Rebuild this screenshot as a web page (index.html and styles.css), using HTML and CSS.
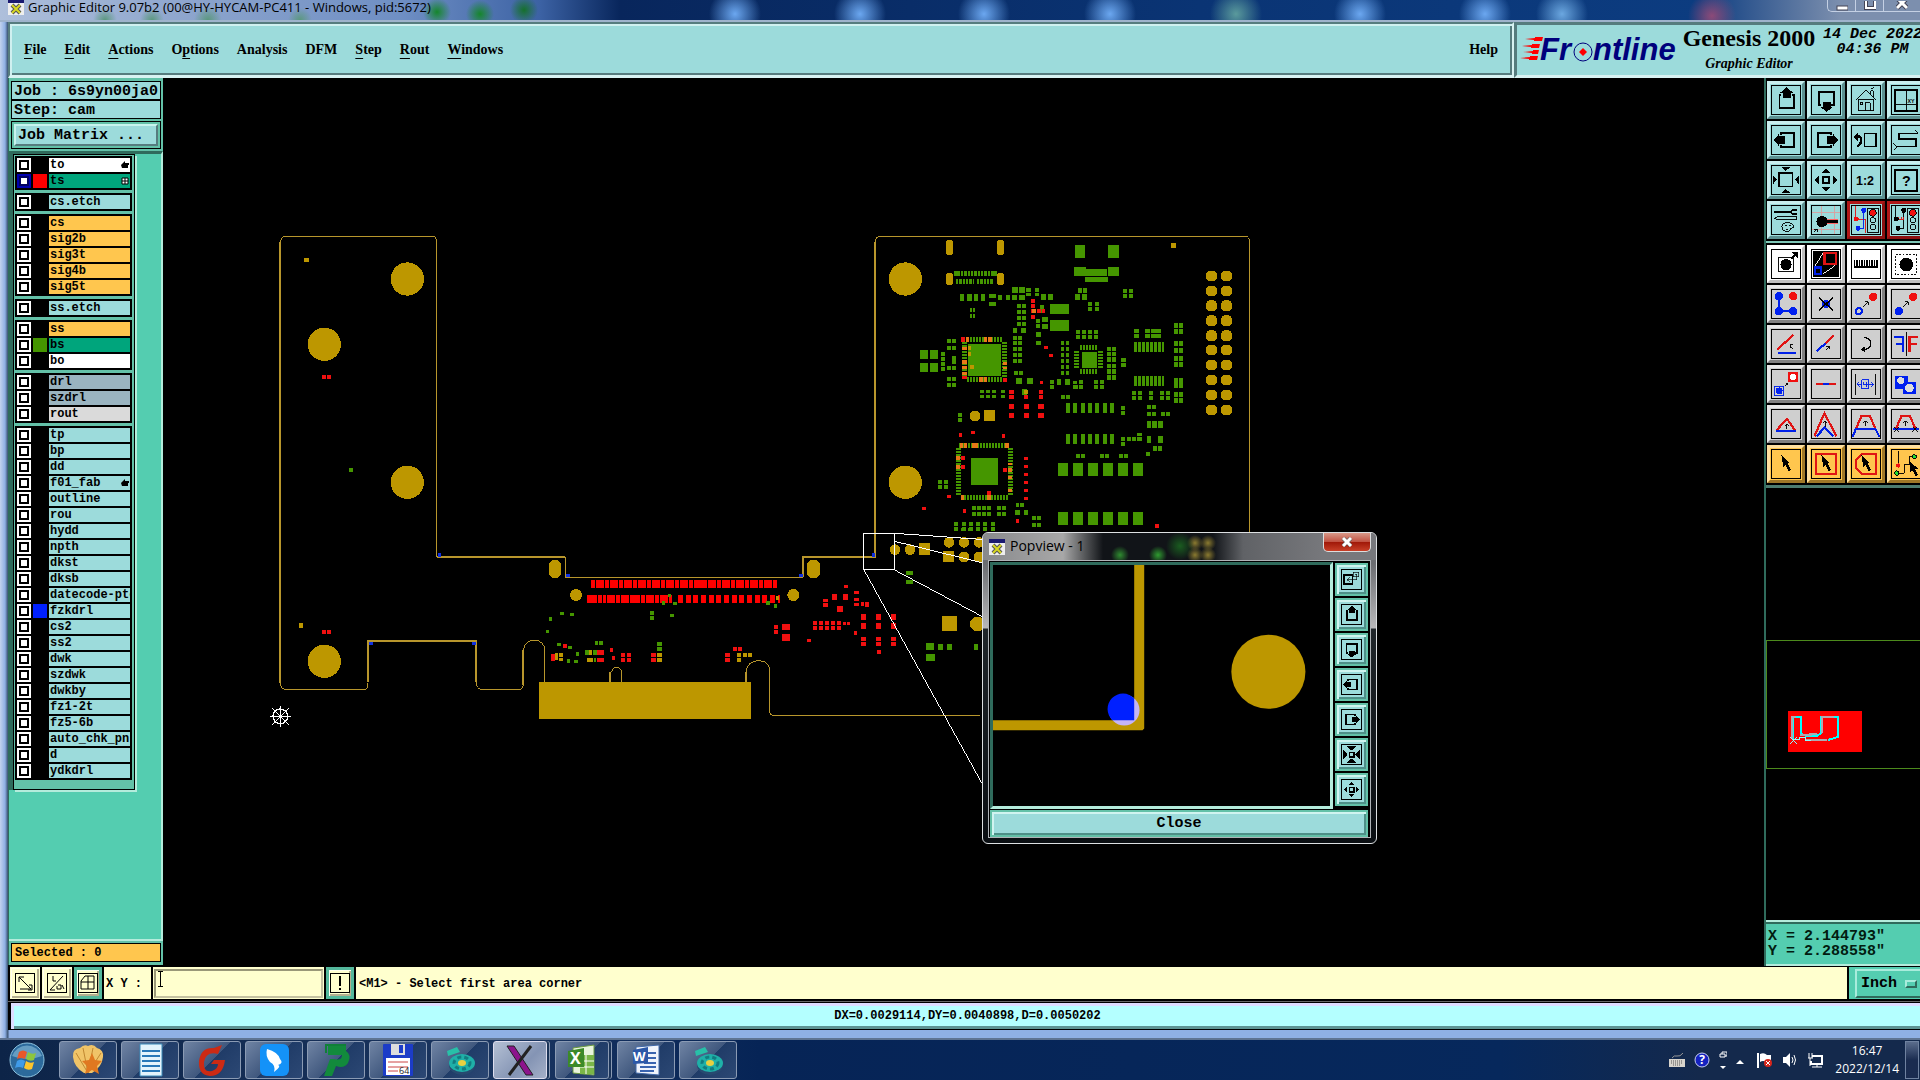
FILE: index.html
```
<!DOCTYPE html>
<html lang="en">
<head>
    <meta charset="UTF-8">
    <meta name="viewport" content="width=device-width, initial-scale=1.0">
    <title>Graphic Editor</title>
    <link rel="stylesheet" href="styles.css">
</head>
<body>

<div class="window">
    <div class="titlebar">
        <svg class="appicon" viewBox="0 0 16 16"><rect width="16" height="16" fill="#eee"/><rect width="16" height="4" fill="#1a1a70"/><path d="M4 6l8 8M12 6l-8 8" stroke="#555" stroke-width="4"/><path d="M4 6l8 8M12 6l-8 8" stroke="#d8d820" stroke-width="2"/></svg>
        <span>Graphic Editor 9.07b2 (00@HY-HYCAM-PC411 - Windows, pid:5672)</span>
        <div class="winbtns">
            <button aria-label="Minimize"><svg viewBox="0 0 12 10"><rect x="1" y="5" width="11" height="4" fill="#fff" stroke="#445"/></svg></button>
            <button aria-label="Maximize"><svg viewBox="0 0 12 10"><rect x="2" y="-2" width="9" height="9" fill="none" stroke="#445" stroke-width="4"/><rect x="2" y="-2" width="9" height="9" fill="none" stroke="#fff" stroke-width="2"/></svg></button>
            <button class="wide" aria-label="Close window"><svg viewBox="0 0 12 10"><path d="M1-3l10 10M11-3L1 7" stroke="#445" stroke-width="5"/><path d="M1-3l10 10M11-3L1 7" stroke="#fff" stroke-width="3"/></svg></button>
        </div>
    </div>

    <div class="client">
        <header class="top">
            <nav class="menubar">
                <a href="#"><u>F</u>ile</a>
                <a href="#"><u>E</u>dit</a>
                <a href="#"><u>A</u>ctions</a>
                <a href="#">O<u>p</u>tions</a>
                <a href="#">Analysis</a>
                <a href="#">DFM</a>
                <a href="#"><u>S</u>tep</a>
                <a href="#"><u>R</u>out</a>
                <a href="#"><u>W</u>indows</a>
                <a class="help" href="#">Help</a>
            </nav>
            <div class="brand">
                <svg class="logo" viewBox="0 0 162 28">
                    <path d="M5 3l10-1v-1h8l-1 4h-8v-1zM2 10l10-1v-1h8l-1 4h-8v-1zM3 16l10-1v-1h6l-1 4h-6v-1zM0 22l10-1v-1h8l-1 4h-8v-1z" fill="#f00"/>
                    <text x="20" y="24">Fr</text>
                    <circle cx="63" cy="16" r="9" fill="none" stroke="#00007c" stroke-width="1"/>
                    <path d="M63 12l4 4-4 4-4-4z" fill="#f00"/>
                    <text x="73" y="24">ntline</text>
                </svg>
                <div class="product">
                    <b>Genesis 2000</b>
                    <i>Graphic Editor</i>
                </div>
                <div class="date">14 Dec 2022<br>04:36 PM</div>
            </div>
        </header>

        <main class="work">
            <aside class="left">
                <div class="job">Job : 6s9yn00ja0</div>
                <div class="job">Step: cam</div>
                <div class="matrixbox"><button class="matrix">Job Matrix ...</button></div>
                <div class="layerarea">
                    <div class="layers" id="layers"></div>
                </div>
                <div class="selected">Selected : 0</div>
            </aside>

            <section class="canvas">
                <svg class="board" viewBox="163 78 1602 888" shape-rendering="crispEdges">
                    <!-- left wing -->
                    <g transform="translate(260 220) scale(.3333333)">
                        <g class="line">
                            <path class="thick" d="M61 1390V65M530 1011H725M324 1385V1263H648V1385"/>
                            <path d="M61 70q0-20 16-21H517q14 0 14 14M530 60V1011M61 1390q2 18 16 18H315q10 0 9-18M648 1385q2 23 16 23H722"/>
                        </g>
                        <g class="gold">
                            <circle cx="442" cy="177" r="50"/><circle cx="193" cy="373" r="50"/>
                            <circle cx="442" cy="787" r="50"/><circle cx="193" cy="1324" r="50"/>
                            <path d="M132 115h14v11h-14zM117 1209h12v15h-12z"/>
                        </g>
                        <path class="red" d="M186 465h12v12h-12zM201 465h12v12h-12zM186 1230h12v12h-12zM201 1230h12v12h-12z"/>
                        <path class="green" d="M267 744h12v12h-12z"/>
                        <path class="blue" d="M534 998h9v13h-9zM327 1266h12v9h-12zM636 1266h12v9h-12z"/>
                        <g stroke="#fff" stroke-width="4" fill="none">
                            <circle cx="61" cy="1489" r="22"/>
                            <path d="M30 1489h63M61 1458v63M37 1465l49 49M86 1465l-49 49"/>
                        </g>
                    </g>
                    <!-- edge connector and middle strip -->
                    <g transform="translate(500 530) scale(.3333333)">
                        <g class="line">
                            <path class="thick" d="M0 80H196M909 142V80H1125V-865M70 465V360M331 456V426M738 456V425"/>
                            <path d="M196 80V142H909M0 478H60q10 0 10-12M70 360q5-29 32-29q32 0 32 32V456M331 426q6-14 18-14q16 0 16 16V456M738 425q5-33 38-33q33 0 33 33V546q2 10 10 10H1440"/>
                        </g>
                        <g class="gold">
                            <rect x="117" y="456" width="636" height="111"/>
                            <rect x="147" y="89" width="36" height="55" rx="17"/><rect x="921" y="89" width="39" height="55" rx="17"/>
                            <circle cx="228" cy="195" r="18"/><circle cx="880" cy="195" r="18"/>
                            <circle cx="1185" cy="59" r="16"/><circle cx="1230" cy="59" r="16"/><circle cx="1347" cy="37" r="16"/><circle cx="1392" cy="37" r="16"/><circle cx="1437" cy="37" r="16"/><circle cx="1392" cy="81" r="16"/><circle cx="1437" cy="81" r="16"/><circle cx="1432" cy="282" r="22"/>
                            <path d="M1257 40h33v35h-33zM1329 63h33v33h-33zM1326 258h45v45h-45z"/>
                        </g>
                        <g class="pins redpins">
                            <path stroke-width="24" stroke-dasharray="12 2" d="M273 162H834"/>
                            <path stroke-width="24" stroke-dasharray="12 2" d="M294 207H318M348 207H388M423 207H516"/>
                            <path stroke-width="24" d="M261 207h30M321 207h25M390 207h30M586 162h22"/>
                            <path stroke-width="24" stroke-dasharray="15 8" d="M534 207H840"/>
                        </g>
                        <g id="strip"></g>
                        <path class="blue" d="M198 132h12v10h-12zM897 132h12v10h-12zM1115 69h9v12h-9z"/>
                        <path d="M1090 10h93v109h-93zM1184 10l286 20M1184 34l286 70M1184 120l286 152M1092 120l365 660" fill="none" stroke="#fff" stroke-width="3"/>
                    </g>
                    <!-- right wing -->
                    <g transform="translate(860 220) scale(.3333333)">
                        <g class="line">
                            <path d="M45 70q0-20 14-21H1155q14 0 14 14V1600"/>
                        </g>
                        <g class="gold" id="rightgold">
                            <circle cx="136" cy="177" r="50"/><circle cx="136" cy="787" r="50"/><circle cx="345" cy="588" r="16"/>
                            <rect x="258" y="60" width="21" height="45" rx="10"/><rect x="411" y="60" width="21" height="45" rx="10"/>
                            <rect x="258" y="159" width="21" height="36" rx="10"/><rect x="411" y="159" width="21" height="36" rx="10"/>
                            <path d="M933 69h15v15h-15zM372 570h33v33h-33z"/>
                        </g>
                        <g class="pins">
                            <path stroke-width="15" stroke-dasharray="18 3" d="M282 160h18M393 160h18"/>
                            <path stroke-width="15" stroke-dasharray="7 3" d="M303 160h88M288 184h54M351 184h51"/>
                            <path stroke-width="15" stroke-dasharray="6 3" d="M321 358h105M321 478h105M313 366v108M434 366v108M297 677h150M303 832h141M295 684v141M451 684v141"/>
                            <path stroke-width="15" stroke-dasharray="6 3" d="M660 382h51M660 455h51M651 393v51M721 393v51"/>
                            <path stroke-width="30" stroke-dasharray="9 3" d="M822 381h90M822 483h90"/>
                            <path stroke-width="29" stroke-dasharray="12 10" d="M618 564h144M618 658h144"/>
                            <path stroke-width="39" stroke-dasharray="30 15" d="M594 748h255M594 895h255"/>
                            <path stroke-width="12" stroke-dasharray="12 3" d="M249 396v56"/>
                        </g>
                        <g id="parts"></g>
                    </g>
                </svg>

                <div class="popview">
                    <div class="poptitle">
                        <svg class="appicon" viewBox="0 0 16 16"><rect width="16" height="16" fill="#eee"/><rect width="16" height="4" fill="#1a1a70"/><path d="M4 6l8 8M12 6l-8 8" stroke="#555" stroke-width="4"/><path d="M4 6l8 8M12 6l-8 8" stroke="#d8d820" stroke-width="2"/></svg>
                        <span>Popview - 1</span>
                        <button class="popx" aria-label="Close popview"><svg viewBox="0 0 12 10"><path d="M2 1l8 8M10 1L2 9" stroke="#555" stroke-width="4"/><path d="M2 1l8 8M10 1L2 9" stroke="#fff" stroke-width="3"/></svg></button>
                    </div>
                    <div class="popbody">
                        <div class="popmain">
                            <svg class="popcanvas" viewBox="69 135 1014 722" preserveAspectRatio="xMinYMin slice">
                                <path d="M492 135h30v490l-5 5H69v-30H492z" fill="#bd9700"/>
                                <circle cx="894" cy="455" r="111" fill="#bd9700"/>
                                <circle cx="462" cy="570" r="46" fill="#c5b5f5"/>
                                <path d="M492 535a46 46 0 1 0-65 65h65z" fill="#0020ff"/>
                            </svg>
                            <div class="poptools" id="poptools"></div>
                        </div>
                        <button class="popclose">Close</button>
                    </div>
                </div>
            </section>

            <aside class="right">
                <div class="tools" id="tools1"></div>
                <div class="tools second" id="tools2"></div>
                <div class="preview">
                    <svg viewBox="1 2 154 434" shape-rendering="crispEdges">
                        <rect x="1" y="154" width="170" height="128" fill="none" stroke="#4c8a1c"/>
                        <rect x="23" y="225" width="74" height="41" fill="#f00"/>
                        <path d="M28 253v-22h8v17l6 2h10l4-3v-16h17v20l-10 3" fill="none" stroke="#0ff" stroke-width="2"/>
                        <path d="M27 253v-22h4M57 247v-16h12M35 249h12M40 254h22M44 248h8" fill="none" stroke="#b0a8b0" stroke-width="2"/>
                        <path d="M28 253h6v-2h6v3h6M25 258l7-7M25 251l7 7" fill="none" stroke="#8ff" stroke-width="1"/>
                    </svg>
                </div>
                <div class="coords">X = 2.144793"<br>Y = 2.288558"</div>
            </aside>
        </main>

        <div class="statusbar">
            <button class="sbtn" aria-label="Snap"><svg viewBox="0 0 20 20"><rect x=".5" y=".5" width="19" height="19"/><path d="M4 4l12 12M4 9V4h5M5 16h11M14 12h3v5h-4"/></svg></button>
            <button class="sbtn" aria-label="Angle"><svg viewBox="0 0 20 20"><rect x=".5" y=".5" width="19" height="19"/><path d="M3 17L16 3M3 17h5M6 3v5h3M11 12h3v4h-4v-3M15 12l2 4"/></svg></button>
            <button class="sbtn teal" aria-label="Grid"><svg viewBox="0 0 20 20"><rect x=".5" y=".5" width="19" height="19"/><path d="M7 3h9v13H3V8zM3 9h13M10 3v13"/></svg></button>
            <label class="xy" for="xy">X Y :</label>
            <div class="xybox"><input id="xy" type="text"></div>
            <button class="sbtn teal" aria-label="Alert"><svg viewBox="0 0 20 20"><rect x=".5" y=".5" width="19" height="19"/><path d="M10 3v10M10 15v2" stroke-width="2"/></svg></button>
            <div class="message">&lt;M1&gt; - Select first area corner</div>
            <div class="unitbox"><button class="unit">Inch <span></span></button></div>
        </div>
        <div class="infobar">DX=0.0029114,DY=0.0040898,D=0.0050202</div>
    </div>
</div>

<footer class="taskbar">
    <button class="start" aria-label="Start">
        <svg viewBox="0 0 36 36">
            <circle cx="18" cy="18" r="17" fill="#2c6a9c"/><circle cx="18" cy="18" r="17" fill="none" stroke="#8fc4e0"/>
            <path d="M3 14a16 16 0 0 1 30 0q-15 6-30 0z" fill="#8cc0dc" opacity=".6"/>
            <path d="M10 10q4-3 8 0l-2 7q-4-2-8 0z" fill="#e8582a"/><path d="M19 10q4 3 8 1l-2 7q-4 2-8-1z" fill="#8cc63e"/>
            <path d="M8 19q4-3 8 0l-2 7q-4-2-8 0z" fill="#3f9be8"/><path d="M17 19q4 3 8 1l-2 7q-4 2-8-1z" fill="#fcc52c"/>
        </svg>
    </button>
    <div class="apps" id="apps"></div>
    <div class="tray">
        <svg width="16" height="14" viewBox="0 0 16 14"><path d="M3 5q2-3 5-2t6-3" fill="none" stroke="#999"/><rect x="0" y="6" width="16" height="8" fill="#d8d4cc"/><path d="M2 8h12M2 10h12M4 12h8" stroke="#555" stroke-dasharray="1 1"/></svg>
        <svg width="16" height="16" viewBox="0 0 16 16"><circle cx="8" cy="8" r="7" fill="#1522c0" stroke="#c8d0f0"/><text x="8" y="12" text-anchor="middle" font-size="12" font-weight="bold" fill="#fff">?</text></svg>
        <svg width="8" height="18" viewBox="0 0 8 18"><path d="M3 3V1h5v4H6M1 3h5v3H1z" fill="none" stroke="#fff"/><path d="M1 15h6l-3 3z" fill="#fff"/></svg>
        <svg class="uparrow" width="8" height="4" viewBox="0 0 8 4"><path d="M0 4h8L4 0z" fill="#fff"/></svg>
        <svg width="16" height="16" viewBox="0 0 16 16"><path d="M1 1v15" stroke="#fff" stroke-width="2"/><path d="M3 2q4-2 7 1h4v7H9q-3-2-6 0z" fill="#fff"/><circle cx="11" cy="11" r="4" fill="#d8261c"/><path d="M9 9l4 4M13 9l-4 4" stroke="#fff"/></svg>
        <svg width="16" height="16" viewBox="0 0 16 16"><path d="M1 5h3l4-4v14l-4-4H1z" fill="#fff"/><path d="M10 5q2 3 0 6M12 3q3 5 0 10" fill="none" stroke="#fff"/></svg>
        <svg width="16" height="16" viewBox="0 0 16 16"><path d="M5 4h10v8H4V9" fill="none" stroke="#fff" stroke-width="2"/><path d="M5 15h10M10 12v3M2 1v5M5 1v5M1 6h5M3 6v8" stroke="#fff"/></svg>
        <div class="clock">16:47<br>2022/12/14</div>
        <button class="desktop" aria-label="Show desktop"></button>
    </div>
</footer>

<script src="script.js"></script>
</body>
</html>
```
FILE: styles.css
```
* { box-sizing: border-box; }
body {
    margin: 0;
    height: 100vh;
    display: flex;
    flex-direction: column;
    overflow: hidden;
    background: #0a2450;
    font-family: "Liberation Mono", monospace;
    font-weight: bold;
    color: #000;
}
button {
    font: inherit;
    color: inherit;
    padding: 0;
    margin: 0;
    border: 0;
    background: none;
    cursor: pointer;
}
svg { display: block; }

/* window frame */
.window {
    flex: 1;
    min-height: 0;
    display: flex;
    flex-direction: column;
    padding: 0 0 8px 8px;
    background: linear-gradient(90deg, #c3d3ee 0, #8fb0e4 5px, #38506e 8px, #8fb0e4 9px);
}
.titlebar {
    flex: none;
    display: flex;
    align-items: flex-start;
    height: 22px;
    margin-left: -8px;
    padding-left: 8px;
    border-bottom: 2px solid #9fb3cc;
    background:
        radial-gradient(circle at 437px 12px, #15862c 0, transparent 14px),
        radial-gradient(circle at 480px 14px, #15862c 0, transparent 14px),
        radial-gradient(circle at 524px 10px, #15702c 0, transparent 14px),
        radial-gradient(circle at 105px 20px, #5b987e 0, transparent 12px),
        radial-gradient(circle at 152px 20px, #5b987e 0, transparent 12px),
        radial-gradient(circle at 208px 20px, #5b987e 0, transparent 14px),
        radial-gradient(circle at 300px 20px, #5b987e 0, transparent 12px),
        radial-gradient(circle at 735px 14px, #6ba7f0 0, transparent 26px),
        radial-gradient(circle at 860px 14px, #6ba7f0 0, transparent 26px),
        radial-gradient(circle at 984px 14px, #6ba7f0 0, transparent 26px),
        radial-gradient(circle at 1110px 14px, #6ba7f0 0, transparent 26px),
        radial-gradient(circle at 1236px 14px, #5a9a9c 0, transparent 26px),
        radial-gradient(circle at 1360px 14px, #6ba7f0 0, transparent 26px),
        radial-gradient(circle at 1485px 14px, #6ba7f0 0, transparent 26px),
        radial-gradient(circle at 1562px 14px, #6ba7e0 0, transparent 26px),
        radial-gradient(circle at 1712px 16px, #8c4a78 0, transparent 24px),
        linear-gradient(90deg, #aebfdb 0, #8ba3cc 200px, #6f8fc4 400px, #3c62a4 540px, #08265c 620px, #0a3474 1200px, #0c3c80 1700px, #7c8fae 1840px);
    font: 13px/14px "Open Sans", sans-serif;
}
.appicon { width: 16px; height: 16px; flex: none; }
.titlebar .appicon { margin: -1px 4px 0 0; }
.winbtns {
    display: flex;
    margin-left: auto;
    height: 12px;
    border: 1px solid #c4d0e4;
    border-top: 0;
    border-right: 0;
    border-radius: 0 0 0 5px;
}
.winbtns button {
    width: 28px;
    height: 11px;
    border-right: 1px solid #c4d0e4;
    overflow: hidden;
}
.winbtns .wide { width: 36px; border: 0; }
.winbtns svg { width: 12px; height: 10px; margin: 0 auto; }
.client {
    flex: 1;
    min-height: 0;
    display: flex;
    flex-direction: column;
    background: #000;
}

/* header */
.top { flex: none; display: flex; height: 56px; overflow: hidden; background: #9cdbdb; }
.menubar {
    flex: 1;
    display: flex;
    align-items: center;
    gap: 18px;
    padding: 0 14px 0 14px;
    border: 2px solid #567c7e;
    border-right-color: #d8f2f2;
    border-bottom: 3px solid #d8f2f2;
    box-shadow: inset 2px 2px #d0f0f0, inset -2px -2px #567c7e;
    font: bold 14px/18px "Liberation Serif", serif;
}
.menubar a { color: #000; text-decoration: none; }
.menubar u { text-underline-offset: 4px; text-decoration-thickness: 1px; }
.menubar .help { margin-left: auto; }
.brand {
    flex: none;
    width: 406px;
    display: flex;
    border: 3px solid #567c7e;
    border-right: 0;
    border-bottom-color: #d8f2f2;
    padding-left: 3px;
}
.logo { width: 162px; height: 28px; margin-top: 11px; flex: none; overflow: visible; }
.logo text { font: italic bold 31px "Liberation Sans", sans-serif; fill: #00007c; }
.product {
    flex: none;
    display: flex;
    flex-direction: column;
    align-items: center;
    width: 134px;
    font-family: "Liberation Serif", serif;
    white-space: nowrap;
    font-size: 24px;
    line-height: 26px;
}
.product i { font-size: 14px; line-height: 26px; }
.date {
    flex: none;
    margin-left: 7px;
    width: 99px;
    font-size: 15px;
    font-style: italic;
    line-height: 15px;
    text-align: center;
    white-space: nowrap;
    padding-top: 2px;
}

.work { flex: 1; min-height: 0; display: flex; }

/* layer list */
.left {
    flex: none;
    width: 155px;
    margin-bottom: 1px;
    display: flex;
    flex-direction: column;
    background: #63c1a8;
    border-left: 1px solid #2f6b5c;
    padding-top: 3px;
}
.job {
    height: 19px;
    margin: 0 2px;
    padding-left: 2px;
    background: #9cdbdb;
    border: 1px solid #000;
    font-size: 15px;
    line-height: 19px;
    white-space: nowrap;
    overflow: hidden;
}
.matrixbox { margin: 2px 2px 2px; padding: 2px; border: 1px solid #000; }
.matrix {
    display: block;
    width: 100%;
    height: 22px;
    padding: 0 0 0 2px;
    text-align: left;
    font-size: 15px;
    line-height: 20px;
    background: #9cdbdb;
    border: 2px solid #c8f4ee;
    border-right-color: #567c7e;
    border-bottom-color: #567c7e;
}
.layerarea {
    flex: 1;
    min-height: 0;
    background: #54cdb0;
    border-top: 3px solid #2f6b5c;
    border-right: 2px solid #b4ecdc;
    border-bottom: 2px solid #b4ecdc;
}
.layers {
    width: 122px;
    margin-left: 4px;
    padding: 1px 2px 9px 1px;
    border: 1px solid #000;
    background: #63c1a8;
    box-shadow: -4px 0 #2f6b5c, 2px 2px #b4ecdc;
    display: flex;
    flex-direction: column;
    gap: 3px;
}
.group {
    background: #000;
    padding: 2px;
    display: grid;
    gap: 2px;
}
.layer {
    display: grid;
    grid-template-columns: 14px 14px 1fr;
    gap: 2px;
    height: 14px;
    font-size: 12px;
    line-height: 14px;
}
.layer input {
    appearance: none;
    width: 14px;
    height: 14px;
    margin: 0;
    background: #fff;
    border: 2px solid #fff;
    box-shadow: inset 0 0 0 2px #000;
}
.layer input:checked {
    border-color: #0000b0;
    box-shadow: inset 0 0 0 2px #000060;
}
.name {
    display: flex;
    justify-content: space-between;
    align-items: center;
    padding: 0 1px;
    white-space: nowrap;
    overflow: hidden;
    background: #9cdbdb;
}
.name svg { width: 8px; height: 8px; flex: none; }
.white .name { background: #fff; }
.active .name { background: #00a57c; }
.gold .name { background: #ffc64e; }
.slate .name { background: #9ab4c0; }
.gray .name { background: #dadada; }
.selected {
    height: 19px;
    margin: 2px 2px 3px;
    padding-left: 3px;
    border: 1px solid #000;
    background: #ffc64e;
    font-size: 12px;
    line-height: 18px;
}

/* board */
.canvas { flex: 1; min-width: 0; position: relative; overflow: hidden; background: #000; }
.board { width: 1602px; height: 888px; }
.board .gold, .board .goldpart { fill: #bd9700; }
.line path { fill: none; stroke: #b8962c; stroke-width: 3; }
.line .thick { stroke-width: 5; }
.red { fill: #f01010; }
.green { fill: #459600; }
.blue { fill: #1030e0; }
.orange { fill: #e87818; }
.pins path { stroke: #459600; fill: none; }
.redpins path { stroke: #f00; }

/* popup window over the board */
.popview {
    position: absolute;
    left: 819px;
    top: 454px;
    width: 395px;
    height: 312px;
    padding: 0 5px 5px;
    border: 1px solid #dde0e2;
    border-radius: 6px;
    background: linear-gradient(#77787c 0, #6a6c70 30px, #b8b8ba 95px, #20262a 96px, #0a0e12 100%);
    display: flex;
    flex-direction: column;
}
.poptitle {
    flex: none;
    height: 27px;
    margin: 0 -5px;
    border-radius: 5px 5px 0 0;
    padding: 6px 5px 0 6px;
    display: flex;
    gap: 5px;
    background:
        radial-gradient(circle at 137px 22px, #2f8c30 0, transparent 9px),
        radial-gradient(circle at 175px 22px, #2f9c30 0, transparent 9px),
        radial-gradient(circle at 197px 13px, #1a5c20 0, transparent 14px),
        radial-gradient(circle at 212px 10px, #8a7a30 0, transparent 8px),
        radial-gradient(circle at 225px 10px, #8a7a30 0, transparent 8px),
        radial-gradient(circle at 212px 22px, #8a7a30 0, transparent 8px),
        radial-gradient(circle at 225px 22px, #8a7a30 0, transparent 8px),
        linear-gradient(90deg, #88898c 0, #a8a8a8 80px, #111418 120px, #111418 230px, #606266 260px, #77787c 340px);
    font: 14px/14px "Open Sans", sans-serif;
}
.popx {
    width: 48px;
    height: 19px;
    margin: -6px 0 0 auto;
    border: 1px solid #ddd;
    border-top: 0;
    border-radius: 0 0 5px 5px;
    background: linear-gradient(#d89888 0, #c05040 50%, #a01808 51%, #c84028 100%);
}
.popx svg { width: 12px; height: 10px; margin: 0 auto; }
.popbody {
    flex: 1;
    min-height: 0;
    display: flex;
    flex-direction: column;
    gap: 1px;
    padding: 1px 1px 0;
    background: #000;
    border: 1px solid #b0b4b8;
}
.popmain { flex: 1; min-height: 0; display: flex; gap: 2px; }
.popcanvas {
    flex: 1;
    min-width: 0;
    height: 100%;
    border: 3px solid #2f6b5c;
    border-right-color: #b4ecdc;
    border-bottom-color: #b4ecdc;
}
.poptools { flex: none; width: 34px; display: flex; flex-direction: column; gap: 2px; padding-top: 1px; }
.poptools button {
    width: 33px;
    height: 33px;
    padding: 2px;
    background: #9cdbdb;
    border: 2px solid #63c1a8;
    box-shadow: inset 2px 2px #d0f4f0, inset -2px -2px #4f9088;
}
.poptools svg { width: 21px; height: 21px; margin: 2px; border: 1px solid #000; }
.popclose {
    flex: none;
    height: 27px;
    margin-right: 1px;
    font-size: 15px;
    background: #9cdbdb;
    border: 2px solid #63c1a8;
    box-shadow: inset 2px 2px #d0f4f0, inset -2px -2px #4f9088;
}

/* tool buttons */
.right {
    flex: none;
    width: 156px;
    overflow: hidden;
    display: flex;
    flex-direction: column;
    border-left: 2px solid #2f6b5c;
}
.tools {
    flex: none;
    width: 160px;
    display: grid;
    grid-template-columns: repeat(4, 38px);
    gap: 2px;
    padding: 3px 0 0 1px;
    background: #000;
}
.second { margin-top: 2px; border-top: 2px solid #7fc8b8; padding-top: 2px; padding-bottom: 2px; border-bottom: 3px solid #4d7c70; }
.tools button {
    height: 38px;
    padding: 1px;
    background: #9cdbdb;
    border: 3px solid #c8eeee;
    border-right-color: #5d9090;
    border-bottom-color: #5d9090;
}
.tools svg { width: 30px; height: 30px; border: 1px solid #000; }
.tools .hot { border-color: #b01818 #8c1010 #8c1010 #b01818; }
.tools .on { background: #fff; border-color: #fff #c0c0c0 #c0c0c0 #fff; }
.tools .plain { background: #cfcfcf; border-color: #e8e8e8 #808080 #808080 #e8e8e8; }
.tools .pick { background: #ffc64e; border-color: #ffe0a0 #a07828 #a07828 #ffe0a0; }
.tools svg { fill: none; stroke: #000; stroke-width: 6; shape-rendering: crispEdges; }
.poptools svg { fill: none; stroke: #000; stroke-width: 8; shape-rendering: crispEdges; }
.f { fill: #000; stroke: none; }
.r { stroke: #e01414; stroke-width: 7; }
.b { stroke: #0020e8; stroke-width: 7; }
.thin { stroke-width: 3; }
.rf { fill: #f01010; stroke: none; }
.bf { fill: #0020f0; stroke: none; }
.tools text { font: bold 40px "Liberation Sans", sans-serif; fill: #000; stroke: none; }
.preview { flex: 1; min-height: 0; overflow: hidden; }
.preview svg { width: 154px; height: 434px; }
.coords {
    flex: none;
    height: 46px;
    padding: 7px 0 0 2px;
    border-top: 2px solid #b4ecdc;
    border-bottom: 2px solid #b4ecdc;
    box-shadow: inset 0 2px #2f6b5c;
    background: #54cdb0;
    color: #021c10;
    font-size: 15px;
    line-height: 15px;
    white-space: nowrap;
}

/* bottom bars */
.statusbar {
    flex: none;
    display: flex;
    gap: 2px;
    height: 36px;
    padding: 1px 0 2px 2px;
    border-bottom: 1px solid #666;
    background: #000;
    font-size: 12px;
    line-height: 34px;
    white-space: nowrap;
}
.sbtn {
    width: 30px;
    padding: 5px 3px;
    background: #ffffce;
    border: 1px solid #ffffce;
    box-shadow: inset 1px 1px #fffff0, inset -2px -2px #b4b090;
}
.sbtn svg { width: 20px; height: 20px; margin: 0 auto; fill: none; stroke: #000; }
.teal { width: 28px; border: 3px solid #54b89c; padding: 2px 0; }
.xy { width: 47px; padding-left: 2px; background: #ffffce; }
.xybox { position: relative; width: 171px; padding: 2px 1px; background: #ffffce; }
.xybox input {
    display: block;
    width: 100%;
    height: 29px;
    padding: 0 4px;
    border: 2px solid #9a9878;
    border-right-color: #c4c2a0;
    border-bottom-color: #c4c2a0;
    background: #ffffce;
    font: inherit;
}
/* mouse pointer resting in the field */
.xybox::after {
    content: "";
    position: absolute;
    left: 5px;
    top: 4px;
    width: 5px;
    height: 16px;
    background:
        linear-gradient(#000, #000) center / 1px 100% no-repeat,
        linear-gradient(#000, #000) top / 5px 1px no-repeat,
        linear-gradient(#000, #000) bottom / 5px 1px no-repeat;
}
.message { flex: 1; padding-left: 3px; background: #ffffce; }
.unitbox { flex: none; width: 71px; overflow: hidden; padding: 2px 0 0 6px; background: #54cdb0; }
.unit {
    width: 80px;
    height: 29px;
    padding-left: 4px;
    display: flex;
    align-items: center;
    gap: 8px;
    font-size: 15px;
    border: 2px solid #a8ecdc;
    border-bottom-color: #2f6b5c;
}
.unit span { width: 12px; height: 8px; background: #54cdb0; border: 2px solid #a8ecdc; border-right-color: #2f6b5c; border-bottom-color: #2f6b5c; }
.infobar {
    flex: none;
    height: 28px;
    margin-left: 2px;
    border: 1px solid #000;
    border-right: 0;
    background: #b4ffff;
    box-shadow: inset 3px 3px #ddf, inset 0 -3px #5e9494;
    font-size: 12px;
    line-height: 27px;
    text-align: center;
    padding-left: 4px;
}

/* taskbar */
.taskbar {
    flex: none;
    height: 42px;
    display: flex;
    align-items: center;
    border-top: 2px solid #5f7492;
    background: linear-gradient(90deg, #0d2448 0, #1a3560 500px, #062456 760px, #06285c 1500px, #14294c 1700px);
    font: 12px/18px "Open Sans", sans-serif;
    color: #fff;
}
.start { width: 36px; margin: 0 14px 0 9px; }
.start svg { width: 36px; height: 38px; }
.apps { display: flex; gap: 4px; }
.apps button {
    width: 58px;
    height: 38px;
    border: 1px solid #8b9bb4;
    border-radius: 3px;
    background: linear-gradient(135deg, #7084a4 0, #40587e 50%, #203c68 51%, #2c4874 100%);
}
.apps .open { background: linear-gradient(135deg, #b4c0d4, #8494b4 60%, #a4b0c8); border-color: #dde; }
.apps .many { width: 54px; margin-right: 4px; box-shadow: 2px 0 #1a3358, 3px 0 #8b9bb4; }
.apps svg { width: 36px; height: 34px; margin: 0 auto; }
.tray { display: flex; align-items: center; gap: 9px; margin-left: auto; height: 100%; }
.tray text { font-family: "Open Sans", sans-serif; }
.uparrow { margin: 4px 4px 0 0; }
.clock { text-align: center; margin: 0 -3px 0 3px; }
.desktop { width: 14px; height: 38px; margin-right: 1px; border: 1px solid #6f82a0; background: linear-gradient(#5a6c8c, #1a2c50 50%); }
```
FILE: script.js
```
// layer list: name, row style, swatch, marker
var hand = '<svg viewBox="0 0 8 8"><path d="M0 4l4-4v2h4v2H7v3H1z"/></svg>';
var mark = '<svg viewBox="0 0 8 8"><path d="M1 1h6v6H1z" fill="#fff"/><path d="M1 1h6v6H1zM4 1v6M1 4h6" fill="none" stroke="#000"/></svg>';
var groups = [
    [["to", "white", "", hand], ["ts", "active", "#f00", mark]],
    [["cs.etch"]],
    [["cs", "gold"], ["sig2b", "gold"], ["sig3t", "gold"], ["sig4b", "gold"], ["sig5t", "gold"]],
    [["ss.etch"]],
    [["ss", "gold"], ["bs", "active", "#459600"], ["bo", "white"]],
    [["drl", "slate"], ["szdrl", "slate"], ["rout", "gray"]],
    [["tp"], ["bp"], ["dd"], ["f01_fab", "", "", hand], ["outline"], ["rou"], ["hydd"], ["npth"], ["dkst"], ["dksb"],
     ["datecode-ptc"], ["fzkdrl", "", "#0020ff"], ["cs2"], ["ss2"], ["dwk"], ["szdwk"], ["dwkby"], ["fz1-2t"],
     ["fz5-6b"], ["auto_chk_pnl"], ["d"], ["ydkdrl"]]
];
document.getElementById("layers").innerHTML = groups.map(function (g) {
    return '<div class="group">' + g.map(function (l) {
        return '<label class="layer ' + (l[1] || "") + '"><input type="checkbox"' + (l[0] === "ts" ? " checked" : "") + '>' +
            '<span style="background:' + (l[2] || "#000") + '"></span>' +
            '<span class="name">' + l[0] + (l[3] || "") + '</span></label>';
    }).join("") + '</div>';
}).join("");

// pads: x, y, width, height
function pads(id, cls, list) {
    var d = "";
    for (var i = 0; i < list.length; i += 4)
        d += "M" + list[i] + " " + list[i + 1] + "h" + list[i + 2] + "v" + list[i + 3] + "h-" + list[i + 2] + "z";
    document.getElementById(id).innerHTML += '<path class="' + cls + '" d="' + d + '"/>';
}
function grid(id, cls, xs, ys, w, h) {
    var list = [];
    ys.forEach(function (y) { xs.forEach(function (x) { list.push(x, y, w, h); }); });
    pads(id, cls, list);
}

pads("parts", "green", [
    645,75,30,39, 744,75,33,39, 642,141,35,27, 744,141,33,27, 675,147,66,21, 675,170,69,16,
    300,222,12,21, 321,222,15,21, 342,222,12,21, 363,222,12,21, 387,222,21,12, 387,246,21,12,
    414,225,12,15, 438,225,12,15, 456,201,18,18, 477,201,18,18, 498,204,15,12, 525,204,12,12,
    456,225,15,15, 477,225,18,15, 498,219,15,9, 525,219,12,9, 543,222,15,18, 564,222,15,18,
    459,324,12,15, 483,324,15,15, 570,252,57,30, 570,300,57,33, 528,297,12,12, 546,291,18,15,
    528,312,12,12, 546,312,18,15, 528,336,15,15, 528,363,15,12, 540,255,12,24,
    654,204,12,15, 669,204,12,15, 645,222,15,18, 666,222,15,18,
    324,372,99,96, 180,390,24,27, 210,390,24,27, 180,429,24,27, 210,429,24,27,
    276,408,12,24, 261,438,12,12, 276,438,12,12, 666,396,45,48, 783,414,15,12, 783,429,15,12,
    570,480,12,12, 570,495,12,12, 591,477,12,18, 615,477,15,18,
    639,483,12,9, 657,480,12,12, 639,495,15,12, 657,495,12,12,
    468,474,18,18, 501,474,18,18, 463,453,11,12, 477,453,12,12, 603,525,12,12, 618,525,12,12,
    783,558,12,12, 783,573,12,12, 903,576,12,12, 918,576,12,12,
    861,603,12,21, 876,603,15,21, 894,603,15,21, 861,648,12,21, 894,648,15,21,
    879,678,12,15, 894,678,12,15, 858,696,12,12,
    783,651,12,12, 801,651,12,12, 816,651,12,12, 831,639,15,9, 831,651,15,12, 783,666,12,12,
    333,714,81,81, 294,579,12,12, 294,594,12,12,
    468,849,10,12, 480,849,12,12, 465,870,15,15, 492,870,12,15, 486,507,15,18
]);
grid("parts", "green", [330, 339], [264, 282], 6, 12);
grid("parts", "green", [471, 486], [252, 270, 288, 306], 12, 12);
grid("parts", "green", [460, 474], [348, 362, 380, 399, 416], 12, 12);
grid("parts", "green", [789, 807], [207, 222], 12, 12);
grid("parts", "green", [684, 705], [247, 261], 13, 12);
grid("parts", "green", [261, 276], [357, 378], 12, 12);
grid("parts", "green", [261, 276], [471, 489], 12, 12);
grid("parts", "green", [648, 666, 684, 702], [330, 345], 12, 12);
grid("parts", "green", [741, 756], [381, 396, 412, 432, 448, 466], 12, 13);
grid("parts", "green", [603, 618], [363, 381, 399, 417, 435, 453], 9, 12);
grid("parts", "green", [822, 855, 873, 889], [327, 342], 14, 12);
grid("parts", "green", [942, 957], [309, 327, 363, 384, 408, 426, 474, 490, 516, 534], 12, 14);
grid("parts", "green", [816, 834, 867, 900, 918], [513, 528], 13, 12);
grid("parts", "green", [702, 720], [480, 495], 12, 12);
grid("parts", "green", [360, 378, 396, 423], [510, 524], 12, 9);
grid("parts", "green", [861, 876], [555, 576], 12, 12);
grid("parts", "green", [648, 663, 720, 735, 777, 792], [702], 12, 12);
grid("parts", "green", [234, 252], [780, 795], 12, 12);
grid("parts", "green", [336, 351, 366, 381, 411, 426], [858, 876], 12, 12);
grid("parts", "green", [516, 531], [888, 908], 12, 13);
grid("parts", "green", [282, 306, 327, 348, 369, 393], [906, 921], 12, 12);
grid("parts", "red", [513], [237, 252, 268, 285], 12, 12);
grid("parts", "red", [492], [711, 735, 759, 783, 807, 831], 12, 9);
pads("parts", "red", [
    531,267,12,12, 545,267,9,12, 551,378,12,9, 566,402,12,9, 539,483,10,9,
    447,510,15,12, 447,525,15,12, 492,525,12,12, 537,510,12,12, 537,525,12,12,
    447,552,15,15, 492,552,15,15, 534,552,18,15, 447,579,15,15, 492,579,15,15, 534,579,18,15,
    297,639,9,12, 332,633,13,9, 426,642,9,12, 260,825,12,9, 187,861,12,9, 309,867,9,12, 468,897,9,12, 885,912,12,12,
    303,708,12,12, 303,736,12,12, 429,744,12,12, 381,813,12,12, 303,351,13,15, 307,468,13,9, 429,474,12,12
]);
pads("parts", "orange", [
    318,351,9,15, 372,351,9,15, 385,351,12,15, 307,420,13,12, 307,437,13,10, 307,456,13,9, 307,380,13,9,
    429,425,12,10, 429,440,12,8, 358,471,10,15, 372,471,10,15, 300,670,9,14, 313,670,9,14, 336,670,18,14, 435,670,12,14,
    289,708,12,12, 289,736,12,12, 444,728,13,8, 444,745,13,12, 444,767,13,9, 444,808,13,9, 303,826,10,14, 381,826,12,14, 515,268,12,10
]);
pads("parts", "goldpart", [324,378,9,12, 324,396,9,12, 330,435,12,12, 492,510,11,12]);
[168, 213, 257, 302, 347, 390, 435, 480, 525, 570].forEach(function (y) {
    document.getElementById("rightgold").innerHTML +=
        '<rect x="1038" y="' + (y - 16) + '" width="33" height="32" rx="13"/><rect x="1083" y="' + (y - 16) + '" width="33" height="32" rx="13"/>';
});

pads("strip", "red", [
    969,207,15,10, 969,219,15,12, 996,192,15,18, 1029,192,15,18, 1011,228,18,18, 1033,164,11,9,
    1062,183,15,9, 1062,204,15,9, 1062,219,15,9, 1083,216,9,12, 1095,216,12,15,
    846,282,24,18, 846,312,24,21, 822,285,12,12, 822,300,12,12, 921,326,12,9, 1062,302,9,12, 1029,276,9,9, 1041,276,9,9,
    1131,360,12,12, 189,342,12,12, 330,353,9,12, 336,377,9,12, 153,372,12,20, 291,360,21,15, 291,384,21,12,
    453,369,15,12, 453,384,15,12, 699,351,12,12, 714,351,12,12, 675,369,15,12, 675,384,15,12,
    363,369,12,12, 381,369,12,12, 363,384,12,12, 381,384,12,12
]);
grid("strip", "red", [939, 957, 975, 993, 1011], [273, 288], 12, 12);
grid("strip", "red", [1083, 1128, 1173], [252, 279], 15, 18);
grid("strip", "red", [1083, 1128, 1173], [321, 336], 15, 12);
pads("strip", "green", [
    486,212,9,12, 503,192,10,9, 519,216,12,8, 509,252,13,9, 450,243,12,12, 450,258,12,12,
    179,246,12,9, 209,249,12,9, 148,261,8,12, 137,299,9,9, 171,339,12,9, 204,348,12,9, 228,365,9,12, 201,386,9,12, 221,390,12,9,
    285,333,10,12, 298,333,11,12, 471,336,15,12, 471,351,15,12, 255,360,12,15, 279,360,12,15, 281,384,8,12,
    798,213,12,11, 822,222,9,12, 1218,123,21,13, 1218,150,21,11, 1278,339,24,21, 1278,372,27,21, 1314,342,15,18, 1341,342,15,18, 1422,342,12,18,
    1362,-6,12,9, 1383,-6,12,9, 1404,-6,12,9
]);
pads("strip", "goldpart", [
    165,369,9,20, 177,369,12,12, 177,383,12,9, 267,360,9,15, 261,384,18,12, 471,369,15,12, 471,384,15,12,
    711,369,12,12, 729,369,12,12, 744,369,12,12, 711,384,12,12, 828,197,8,12
]);

// tool icons, drawn on a 90 x 90 grid
var up = '<path d="M30 28H24V70H70V28H64"/><path class="f" d="M26 22L47 4 68 22H60V40H35V22z"/>';
var down = '<path d="M30 62H22V20H70V62H62"/><path class="f" d="M26 66L47 84 68 66H60V52H35V66z"/>';
var left = '<path d="M30 30V22H72V68H30V62"/><path class="f" d="M24 24L4 45 24 66V58H42V32H24z"/>';
var right = '<path d="M60 30V22H18V68H60V62"/><path class="f" d="M66 24L86 45 66 66V58H48V32H66z"/>';
var zin = '<path d="M22 22H66V66H22z"/><path class="f" d="M28 2H60L44 16zM28 88H60L44 74zM2 28V60L16 44zM88 28V60L74 44z"/>';
var zout = '<path d="M35 35H56V56H35z"/><path class="f" d="M28 24H62L45 9zM28 66H62L45 81zM24 28V62L8 45zM66 28V62L82 45z"/>';
var arrow = '<path class="f" d="M30 16L58 42 50 44 62 64 54 68 44 48 36 54z"/>';
var light = '<rect class="thin" x="50" y="8" width="34" height="76"/><circle class="rf" cx="67" cy="22" r="11"/><circle class="thin" cx="67" cy="22" r="11"/><circle class="thin" cx="67" cy="46" r="9"/><circle class="thin" cx="67" cy="68" r="9"/>';
function draw(id, list) {
    document.getElementById(id).innerHTML = list.map(function (t) {
        return '<button class="' + t[0] + '" aria-label="' + t[1] + '"><svg viewBox="0 0 90 90">' + t[2] + '</svg></button>';
    }).join("");
}
draw("tools1", [
    ["", "Pan up", up],
    ["", "Pan down", down],
    ["", "Home", '<path class="thin" d="M13 46L45 14 78 46M20 42V80H70V42M20 42H70M42 80V54H58V80M26 52H34V60H26zM60 26V16H68V36M62 10l8-6"/>'],
    ["", "View XY", '<path d="M10 12H80V80H10z"/><path class="thin" d="M46 12V80M10 60H80"/><text x="50" y="54" style="font-size:17px">XY</text>'],
    ["", "Pan left", left],
    ["", "Pan right", right],
    ["", "Previous view", '<path d="M40 24H78V66H40z"/><path d="M14 34H24Q28 34 28 44V52Q28 62 16 64" stroke-width="7"/><path class="f" d="M4 36L18 22V50z"/>'],
    ["", "Serpentine", '<path d="M84 24H22V42H78V66H14"/><path class="thin" d="M76 14l10 10M6 56l10 10-10 10"/>'],
    ["", "Zoom in", zin],
    ["", "Zoom out", zout],
    ["", "Scale", '<text x="13" y="60">1:2</text>'],
    ["", "Query", '<path d="M10 12H80V80H10z"/><text x="32" y="64" style="font-size:46px">?</text>'],
    ["", "Setup", '<path stroke-width="7" d="M8 18H60"/><path stroke-width="5" d="M80 12H66Q56 18 66 26H80"/><path class="thin" d="M8 40L20 34H80V44H20zM32 68Q30 54 50 54Q70 54 70 68L60 72Q58 84 44 82Q34 80 32 68M42 64h6M54 62h6M44 74h6"/>'],
    ["", "Snap pad", '<path class="thin" style="stroke:#d8a0a0" d="M32 0V90M72 0V90M0 20H90M0 76H90"/><path d="M30 50H84" style="stroke:#f66;stroke-width:14"/><path d="M30 50H84" stroke-width="7"/><circle class="f" cx="32" cy="50" r="18"/><path class="thin" d="M6 84l10-10M8 74h9v9"/>'],
    ["hot", "Net check", '<path class="r thin" d="M12 0V42H44V88"/><path class="b thin" d="M38 16V72H20"/><circle class="bf" cx="38" cy="14" r="8"/><circle class="rf" cx="14" cy="42" r="8"/><circle class="bf" cx="20" cy="72" r="8"/>' + light],
    ["hot", "Rule check", '<path class="thin" d="M12 0V42M38 16V72H20"/><path class="r thin" d="M18 42H40M22 34V42M30 34V42M36 34V42"/><circle class="f" cx="38" cy="14" r="8"/><circle class="f" cx="14" cy="42" r="8"/><circle class="f" cx="20" cy="72" r="8"/>' + light]
]);
var bigN = '<path class="b" d="M22 20V68M22 68H68"/><circle class="bf" cx="22" cy="20" r="13"/><circle class="bf" cx="22" cy="68" r="13"/><circle class="bf" cx="68" cy="68" r="13"/><circle class="rf" cx="68" cy="20" r="13"/>';
draw("tools2", [
    ["on", "Select feature", '<path class="thin" d="M22 24H68V70H22z"/><circle class="f" cx="45" cy="47" r="18"/><path stroke-width="7" d="M62 28L80 10"/><path class="f" d="M62 6H84V28z"/>'],
    ["on", "Popview", '<path class="f" d="M4 4H86V86H4z"/><path class="r" d="M40 10H76V46H40z"/><path class="b" d="M10 56H28V76H10z"/><path stroke="#fff" class="thin" d="M10 50L36 10M34 78L74 50"/>'],
    ["on", "Measure", '<path d="M6 54H84"/><path stroke-width="20" stroke-dasharray="4 4" d="M6 42H84"/>'],
    ["on", "Area", '<path class="thin" stroke-dasharray="6 5" d="M12 14H78V80H12z"/><circle class="f" cx="46" cy="47" r="22"/>'],
    ["plain", "Add net", bigN],
    ["plain", "Delete", '<circle class="bf" cx="45" cy="45" r="14"/><path stroke-width="5" d="M22 24L68 66M68 24L22 66"/>'],
    ["plain", "Move", '<circle class="b" cx="22" cy="68" r="10"/><circle class="rf" cx="68" cy="22" r="13"/><path class="thin" d="M34 56L52 38M42 38H52V48"/>'],
    ["plain", "Copy", '<circle class="bf" cx="22" cy="68" r="13"/><circle class="rf" cx="68" cy="22" r="13"/><path class="thin" d="M34 56L52 38M42 38H52V48"/>'],
    ["plain", "Angle", '<path class="r" d="M16 64L68 16"/><path class="b" d="M18 74H76"/><path class="thin" d="M68 60L58 50M58 58V48H68"/>'],
    ["plain", "Line", '<path class="r" d="M44 42L70 16"/><path class="b" d="M16 68L44 42"/><path class="thin" d="M46 62L56 52M46 52H56V60"/>'],
    ["plain", "Rotate", '<path stroke-width="4" d="M40 24Q64 26 60 48Q56 64 34 62"/><path class="f" d="M28 62L42 52V72z"/>'],
    ["plain", "Mirror", '<path class="b" d="M8 22H36V70M12 46H36"/><path class="thin" d="M46 8V82"/><path class="r" d="M82 22H56V70M80 46H56"/>'],
    ["plain", "Replace", '<path class="rf" d="M50 6H84V38H50z"/><circle cx="67" cy="22" r="10" fill="#fff" stroke="none"/><path class="b thin" d="M8 52H38V82H8z"/><circle class="bf" cx="23" cy="67" r="11"/><path class="thin" d="M42 50L50 42M44 42H50V48"/>'],
    ["plain", "Join", '<path class="r" d="M12 44H76"/><path class="b" d="M36 44H54"/>'],
    ["plain", "Spacing", '<path class="thin" d="M12 12V80M74 12V80"/><path class="b thin" d="M16 46H32M54 46H70M32 32H54V60H32zM24 38L16 46 24 54M62 38L70 46 62 54M38 38V48H50M46 40V56"/>'],
    ["plain", "Merge", '<path class="bf" d="M10 18H52V40H76V78H34V60H10z"/><circle cx="28" cy="34" r="11" fill="#ddd" stroke="none"/><circle cx="56" cy="58" r="14" fill="#ddd" stroke="none"/>'],
    ["plain", "Stretch 1", '<path class="r" d="M14 66L48 28 74 66"/><path class="b" d="M12 68H76"/><path class="thin" d="M48 60V46M42 52L48 46 54 52"/>'],
    ["plain", "Stretch 2", '<path class="r" d="M8 84L40 10 78 84"/><path class="b" d="M16 84L40 56 68 84"/><path class="thin" d="M42 54V34M34 42L42 34 50 42"/>'],
    ["plain", "Stretch 3", '<path class="r" d="M14 58L30 20H58L74 58"/><path class="b" d="M2 86L12 62H76L88 86"/><path class="thin" d="M44 52V34M36 42L44 34 52 42"/>'],
    ["plain", "Stretch 4", '<path class="r" d="M14 58L30 20H58L74 58"/><path class="b" d="M2 62H88"/><path class="thin" d="M44 52V34M36 42L44 34 52 42M6 54L22 70M22 54L6 70M66 54L82 70M82 54L66 70"/>'],
    ["pick", "Select", arrow],
    ["pick", "Select rectangle", '<path class="r" d="M14 14H76V76H14z"/>' + arrow],
    ["pick", "Select polygon", '<path class="r" d="M30 14H76V76H30L14 60V30z"/>' + arrow],
    ["pick", "Select net", '<path class="thin" d="M20 4V48M18 74H40V48H56V22H74"/><circle class="rf" cx="20" cy="50" r="7"/><circle class="thin" cx="72" cy="22" r="7" fill="#2d3"/><circle class="thin" cx="16" cy="74" r="7" fill="#2d3"/><path class="f" d="M56 36L84 60 74 62 84 80 76 84 66 66 58 72z"/>']
]);
draw("poptools", [
    ["", "Detach", '<path d="M10 24H50V66H10z"/><path class="thin" d="M54 10H80V32H54zM70 20V46H24M36 36L24 46 36 56M62 20H70"/>'],
    ["", "Up", up], ["", "Down", down], ["", "Left", left], ["", "Right", right],
    ["", "Zoom in", '<path d="M35 35H56V56H35z"/><path class="f" d="M20 4H70L45 26zM20 86H70L45 64zM4 20V70L26 45zM86 20V70L64 45z"/>'],
    ["", "Zoom out", zout]
]);

// taskbar icons on a 36 x 34 grid
var reel = '<ellipse cx="20" cy="22" rx="13" ry="10" fill="#274a70"/><ellipse cx="20" cy="20" rx="13" ry="9" fill="#1fb0a8"/><ellipse cx="20" cy="20" rx="8" ry="6" fill="none" stroke="#127c80" stroke-dasharray="4 3" stroke-width="3"/><ellipse cx="20" cy="20" rx="4" ry="3" fill="#e8d040"/><path d="M5 8l10-4 3 5-12 4z" fill="#28c0a8"/>';
var apps = [
    ["", "Shell", '<path d="M3 14Q2 6 10 5Q14 1 18 3Q23 0 27 5Q34 7 33 14Q32 24 22 30H14Q4 24 3 14z" fill="#f0c468"/><path d="M18 30L6 10M18 30L13 5M18 30L23 5M18 30L31 10" stroke="#c08830" fill="none"/><path d="M22 10l3 7 7 1-5 5 2 8-7-4-7 4 2-8-5-5 7-1z" fill="#e07820"/>'],
    ["", "Notes", '<path d="M8 1H30V33H8z" fill="#e4f4fc" stroke="#3a8ab8"/><path d="M10 8h18M10 13h18M10 18h18M10 23h18M10 28h18" stroke="#2878b8" stroke-width="2"/>'],
    ["", "G", '<path d="M28 2l-4 9Q12 8 10 19Q9 30 18 28Q24 26 24 21H17l3-4h11Q29 33 16 33Q4 32 5 18Q7 4 20 5z" fill="#cc2a14"/>'],
    ["", "Bird", '<rect x="4" y="1" width="29" height="32" rx="6" fill="#1492f8"/><path d="M11 6Q22 9 24 16Q28 20 22 22Q26 23 18 29Q20 22 14 19Q9 13 11 6z" fill="#fff"/>'],
    ["", "P", '<path d="M10 2H28V8Q34 12 30 20Q26 26 18 23L14 33H6L12 16H16Q24 18 24 12H10z" fill="#128a3c"/><path d="M8 10V2H28" fill="none" stroke="#108038" stroke-width="2"/>'],
    ["", "Floppy", '<rect x="3" y="1" width="30" height="32" rx="1" fill="#1c3cc8"/><rect x="11" y="1" width="14" height="11" fill="#ddd"/><rect x="19" y="2" width="4" height="8" fill="#1c3cc8"/><rect x="6" y="15" width="24" height="17" fill="#fff"/><path d="M8 19h20M8 24h20M8 28h10" stroke="#c44"/><text x="19" y="31" font-size="9" fill="#222">64</text>'],
    ["", "Reel", reel],
    ["open many", "X", '<path d="M5 3H12L31 32H24z" fill="#8c148c" stroke="#222"/><path d="M29 3L7 32" stroke="#222" stroke-width="3"/>'],
    ["many", "Excel", '<path d="M9 5L30 2V32L9 30z" fill="#e8f4dc" stroke="#6a9a40"/><path d="M16 12h14v19H16z" fill="#7ab648"/><path d="M16 18h14M16 24h14M22 12v19" stroke="#fff"/><path d="M4 8l16-3v19L4 24z" fill="#3c8a28"/><text x="6" y="21" font-size="16" font-weight="bold" fill="#fff">X</text>'],
    ["", "Word", '<path d="M8 4L31 2V32L8 30z" fill="#f0f4fc" stroke="#4068a8"/><path d="M18 10h10M20 15h8M16 20h12M12 24h16M12 28h14" stroke="#3a64b0" stroke-width="2"/><path d="M5 7l15-3v16L5 21z" fill="#2c58a8"/><text x="5" y="18" font-size="13" font-weight="bold" fill="#fff">W</text>'],
    ["", "Reel 2", reel]
];
document.getElementById("apps").innerHTML = apps.map(function (a) {
    return '<button class="' + a[0] + '" aria-label="' + a[1] + '"><svg viewBox="0 0 36 34">' + a[2] + '</svg></button>';
}).join("");
```
